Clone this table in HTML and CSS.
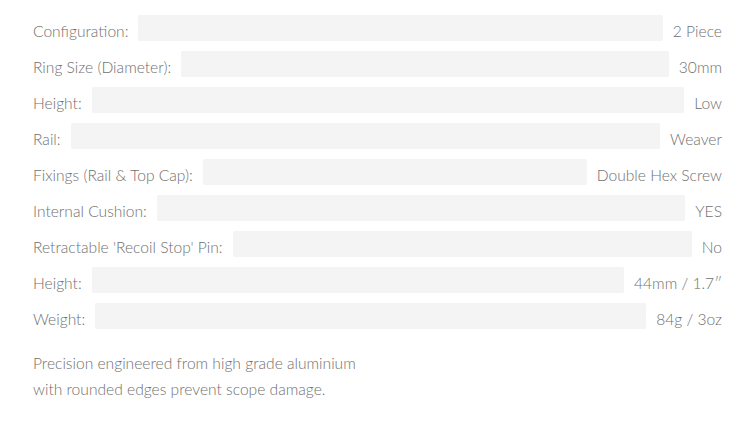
FILE: index.html
```html
<!DOCTYPE html>
<html>
<head>
<meta charset="utf-8">
<link rel="stylesheet" href="styles.css">
</head>
<body>
<div class="specs">
  <div class="row"><span class="label">Configuration:</span><span class="bar"></span><span class="value">2 Piece</span></div>
  <div class="row"><span class="label">Ring Size (Diameter):</span><span class="bar"></span><span class="value">30mm</span></div>
  <div class="row"><span class="label">Height:</span><span class="bar"></span><span class="value">Low</span></div>
  <div class="row"><span class="label">Rail:</span><span class="bar"></span><span class="value">Weaver</span></div>
  <div class="row"><span class="label">Fixings (Rail &amp; Top Cap):</span><span class="bar"></span><span class="value">Double Hex Screw</span></div>
  <div class="row"><span class="label">Internal Cushion:</span><span class="bar"></span><span class="value">YES</span></div>
  <div class="row"><span class="label">Retractable 'Recoil Stop' Pin:</span><span class="bar"></span><span class="value">No</span></div>
  <div class="row"><span class="label">Height:</span><span class="bar"></span><span class="value">44mm / 1.7&Prime;</span></div>
  <div class="row"><span class="label">Weight:</span><span class="bar"></span><span class="value">84g / 3oz</span></div>
  <p class="desc">Precision engineered from high grade aluminium<br>with rounded edges prevent scope damage.</p>
</div>
</body>
</html>
```
FILE: styles.css
```css
html, body {
  margin: 0;
  padding: 0;
  background: #fff;
}
body {
  font-family: Lato, "Open Sans", sans-serif;
  font-weight: 300;
  font-size: 15.6px;
  color: #707070;
}
.specs {
  padding: 15px 34px 0 33px;
  display: flex;
  flex-direction: column;
  gap: 10px;
}
.row {
  display: flex;
  align-items: center;
  height: 26px;
}
.label, .value {
  white-space: nowrap;
  line-height: 26px;
  position: relative;
  top: 3px;
}
.bar {
  flex: 1;
  height: 26px;
  background: #f4f4f4;
  border-radius: 2px;
  margin: 0 10px;
}
.desc {
  margin: 11px 0 0;
  line-height: 26px;
}
```
